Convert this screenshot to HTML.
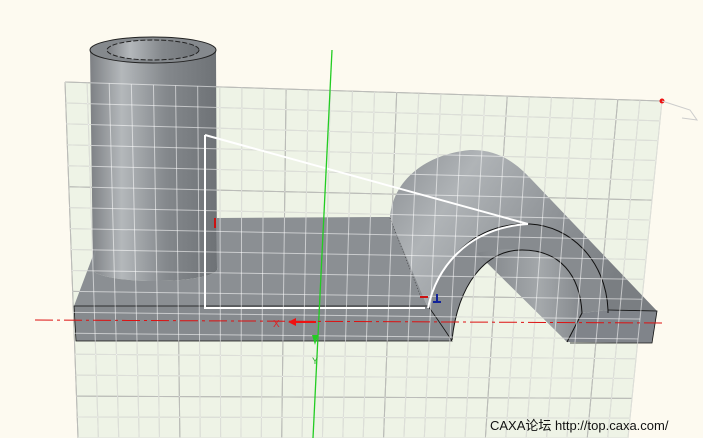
<!DOCTYPE html>
<html><head><meta charset="utf-8"><style>
html,body{margin:0;padding:0;background:#fdfaf0;width:703px;height:438px;overflow:hidden}
svg{position:absolute;left:0;top:0}
.t{position:absolute;left:490px;top:415px;font:13px "Liberation Sans","Noto Sans CJK SC",sans-serif;color:#111}
</style></head><body>
<svg id="s" width="703" height="438" viewBox="0 0 703 438">
<defs>
<linearGradient id="cyl" x1="0" x2="1">
<stop offset="0" stop-color="#7d8084"/><stop offset=".25" stop-color="#b4b8bb"/><stop offset=".6" stop-color="#84888c"/><stop offset="1" stop-color="#6e7276"/></linearGradient>
<linearGradient id="arch" x1="0" y1="0" x2="1" y2="0.4">
<stop offset="0" stop-color="#8a8e92"/><stop offset=".3" stop-color="#b0b4b7"/><stop offset=".7" stop-color="#8d9195"/><stop offset="1" stop-color="#7a7e82"/></linearGradient>
<linearGradient id="inner" x1="0" y1="0" x2="1" y2="0">
<stop offset="0" stop-color="#7f8387"/><stop offset=".6" stop-color="#a4a8ab"/><stop offset="1" stop-color="#85898d"/></linearGradient>
</defs>
<polygon points="65,82 662,101 628,438 78,438" fill="#eef3e6"/>
<g id="grid" stroke-width="1" fill="none"></g>
<!-- cylinder -->
<path d="M90,50 L93,270 A62,12 0 0 0 217,268 L216,50 Z" fill="url(#cyl)"/>
<ellipse cx="153" cy="50" rx="63" ry="13" fill="#85898d" stroke="#222" stroke-width="1"/>
<ellipse cx="153" cy="50" rx="46" ry="10" fill="url(#cyl)" stroke="#222" stroke-dasharray="5,2"/>
<!-- slab top -->
<path d="M74,306 L97,245 L93,270 A62,12 0 0 0 217,268 L216,218 L390,217 L428,308 Z" fill="#8b8f93"/>
<!-- arch outer surface -->
<path d="M390,218 C392,185 420,155 470,150 C500,149 518,165 532,180 L657,311 L608,310 C606,260 570,226 530,224 C475,222 440,260 428,308 Z" fill="url(#arch)"/>
<path d="M390,218 L420,295" stroke="#333" stroke-width="0.6" stroke-dasharray="1,2"/>
<!-- front ring face -->
<path d="M428,308 C440,260 475,222 530,224 C570,226 606,260 608,310 L582,313 C580,275 560,250 522,250 C485,250 458,285 452,340 L440,340 Z" fill="#878b8f"/>
<!-- inner surface -->
<path d="M477,253 C495,249 510,248 522,250 C560,250 580,275 582,313 L567,342 Z" fill="url(#inner)"/>
<!-- right block front -->
<path d="M608,310 L657,311 L652,343 L567,342 L582,313 Z" fill="#80848a"/>
<path d="M428,308 C440,260 475,222 530,224 C570,226 606,260 608,310 L608,313" fill="none" stroke="#111" stroke-width="1"/>
<path d="M452,340 C458,285 485,250 522,250 C560,250 580,275 582,313 L567,342" fill="none" stroke="#111" stroke-width="1"/>
<path d="M608,310 L657,311 L652,343 L570,343" fill="none" stroke="#111" stroke-width="0.8"/>
<!-- slab front -->
<path d="M74,306 L428,306 C438,320 445,330 452,341 L76,341 Z" fill="#868a8e" stroke="#111" stroke-width="0.8"/>
<g id="grid2" stroke="#ffffff" stroke-opacity=".55" stroke-width="1" fill="none"></g>
<!-- sketch lines -->
<polyline points="205,135 205,308 425,308" fill="none" stroke="#fff" stroke-width="2"/>
<line x1="205" y1="135" x2="528" y2="224" stroke="#fff" stroke-width="2"/>
<path d="M428,308 C436,270 465,228 528,224" fill="none" stroke="#fff" stroke-width="2"/>
<!-- axes -->
<line x1="332" y1="50" x2="313" y2="438" stroke="#22cc22" stroke-width="1.3"/>
<line x1="35" y1="320" x2="662" y2="323" stroke="#dd1111" stroke-width="1" stroke-dasharray="18,4,3,4"/>
<path d="M288,322 L296,318 L296,321 L316,321 L316,323 L296,323 L296,326 Z" fill="#ee1111"/>
<text x="273" y="327" font-size="10" fill="#dd2222" font-family="Liberation Sans">X</text>
<path d="M315,345 L312,335 L318,335 Z" fill="#22cc22"/>
<text x="312" y="364" font-size="9" fill="#22aa22" font-family="Liberation Sans">Y</text>
<line x1="215" y1="218" x2="215" y2="228" stroke="#cc1111" stroke-width="2"/>
<line x1="420" y1="297" x2="428" y2="297" stroke="#cc1111" stroke-width="2"/>
<path d="M433,302 L441,302 M437,294 L437,302" stroke="#112299" stroke-width="2"/>
<circle cx="662" cy="101" r="2.5" fill="#e11"/>
<path d="M662,101 L690,110 L697,120 L682,118" fill="none" stroke="#ccc"/>
</svg>
<div class="t">CAXA论坛 http://top.caxa.com/</div>
<script>
var g=document.getElementById('grid'),g2=document.getElementById('grid2');
var A=[65,82],B=[662,101],C=[628,438],D=[78,438];
function P(u,v){var tx=A[0]+(B[0]-A[0])*u,ty=A[1]+(B[1]-A[1])*u,bx=D[0]+(C[0]-D[0])*u,by=D[1]+(C[1]-D[1])*u;return [tx+(bx-tx)*v,ty+(by-ty)*v];}
var NU=27,NV=17,h='',h2='';
for(var i=0;i<=NU;i++){var a=P(i/NU,0),b=P(i/NU,1);h+='<line x1="'+a[0]+'" y1="'+a[1]+'" x2="'+b[0]+'" y2="'+b[1]+'" stroke="'+(i%5==0?'#6a6d66':'#b4b8ac')+'"/>';h2+='<line x1="'+a[0]+'" y1="'+a[1]+'" x2="'+b[0]+'" y2="'+b[1]+'"/>';}
for(var j=0;j<=NV;j++){var a=P(0,j/NV),b=P(1,j/NV);h+='<line x1="'+a[0]+'" y1="'+a[1]+'" x2="'+b[0]+'" y2="'+b[1]+'" stroke="'+(j%5==0?'#6a6d66':'#b4b8ac')+'"/>';h2+='<line x1="'+a[0]+'" y1="'+a[1]+'" x2="'+b[0]+'" y2="'+b[1]+'"/>';}
g.innerHTML=h;g2.innerHTML=h2;
</script>
</body></html>
